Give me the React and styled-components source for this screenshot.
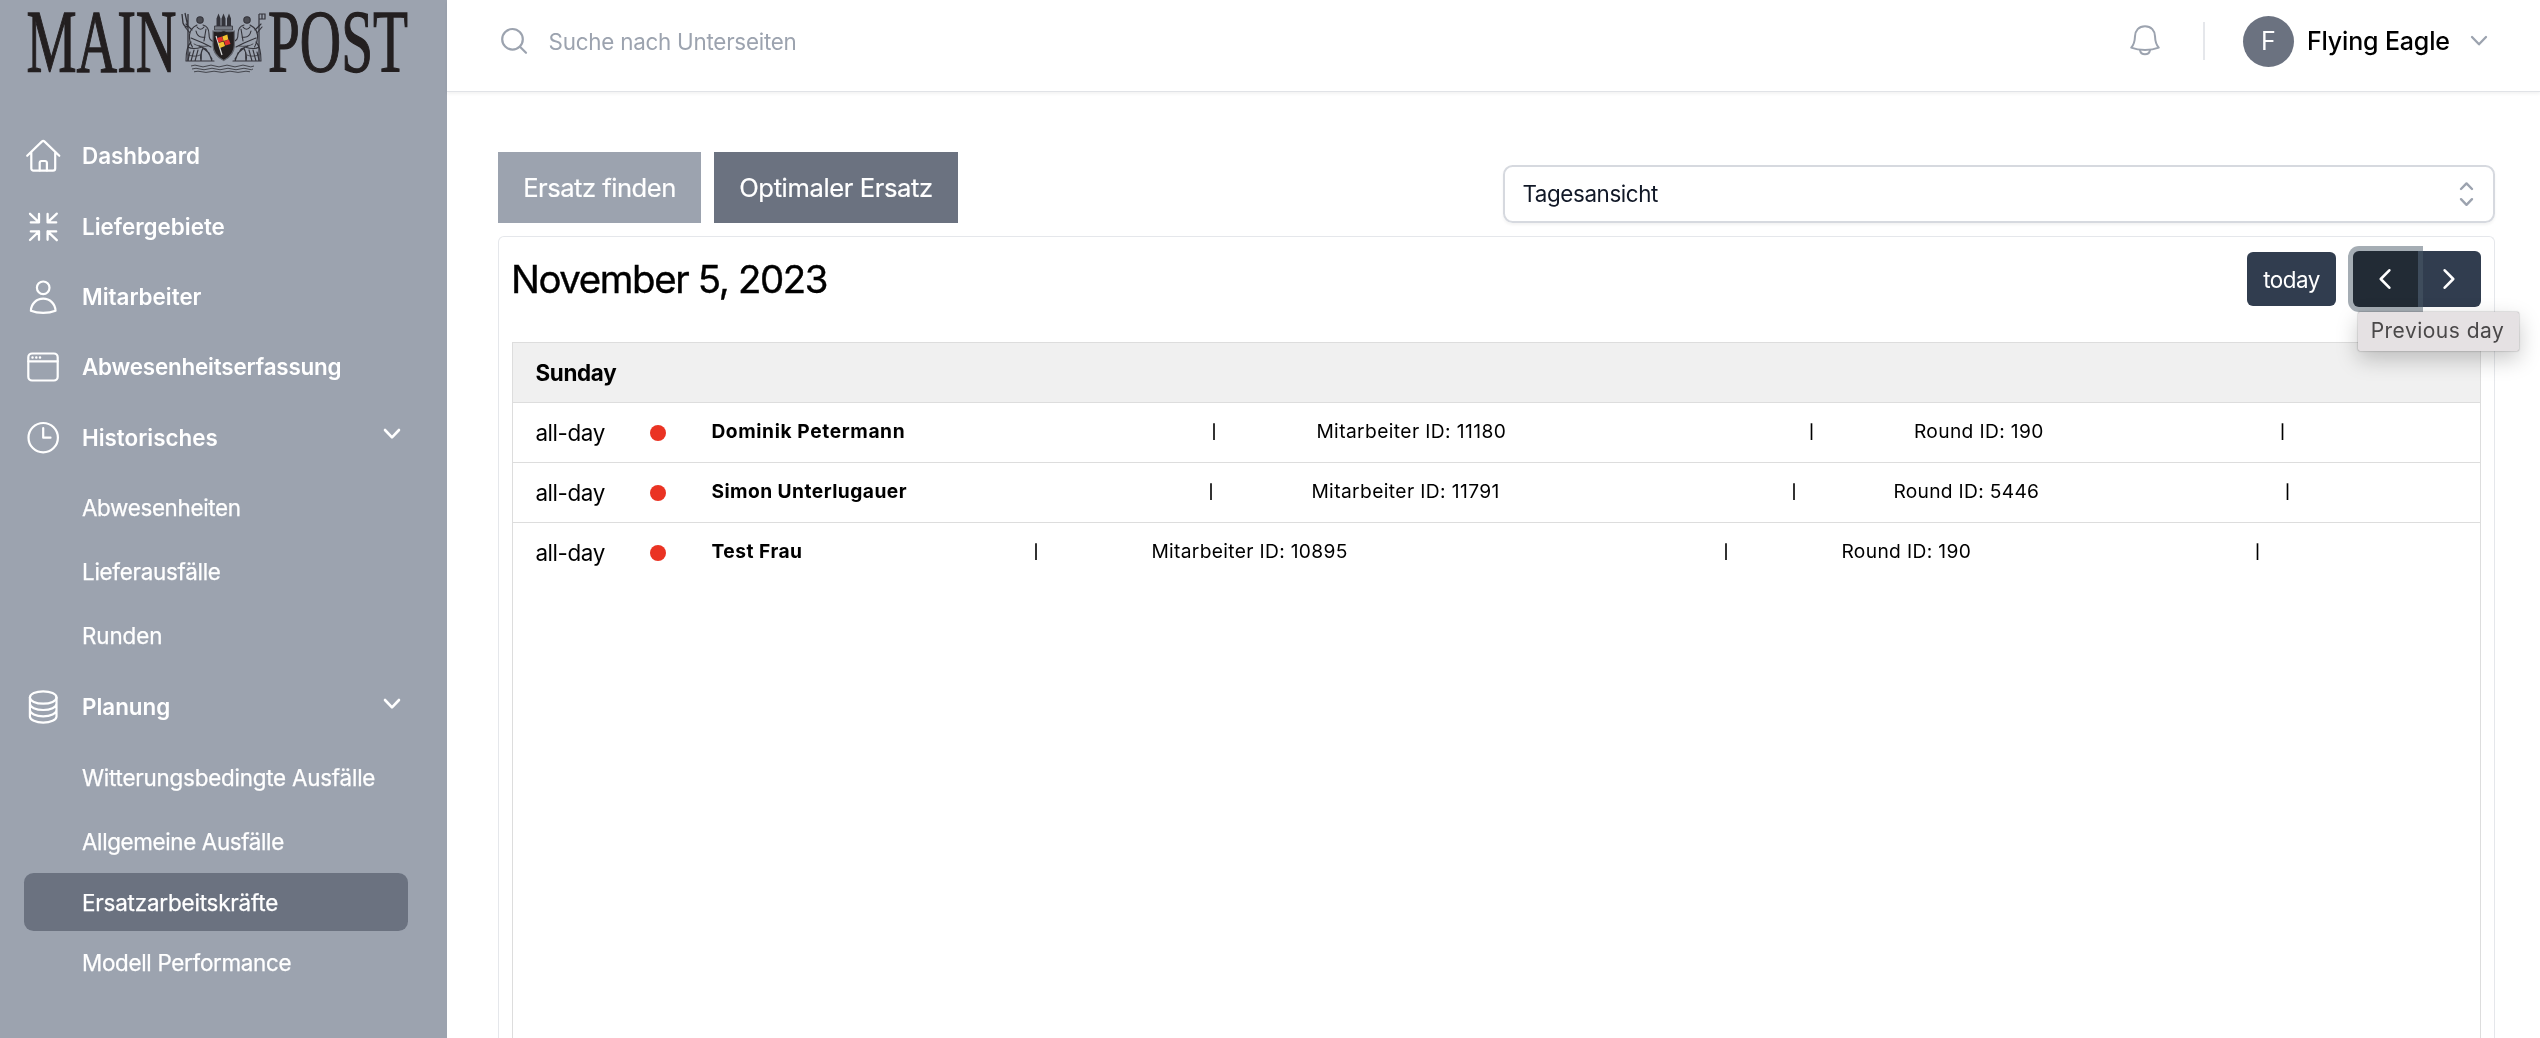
import React from 'react';
import styled, { createGlobalStyle } from 'styled-components';

const GlobalStyle = createGlobalStyle`
  *, *::before, *::after { box-sizing: border-box; }
  body {
    margin: 0;
    overflow: hidden;
    background: #fff;
    color: #000;
    font-family: Inter, 'Liberation Sans', sans-serif;
    font-size: 22.4px;
  }
  button { font: inherit; border: 0; margin: 0; cursor: pointer; }
`;

const Shell = styled.div`
  display: flex;
  height: 1038px;
  overflow: hidden;
  will-change: transform;
`;

/* ---------- sidebar ---------- */
const Sidebar = styled.aside`
  flex: none;
  width: 447px;
  padding: 0 39px 0 24px;
  background: #9ca3af;
  color: #fff;
`;

const LogoBox = styled.div`
  height: 120.6px;
  margin-left: -24px;
  svg { display: block; overflow: visible; }
`;

const NavItem = styled.a`
  display: flex;
  align-items: center;
  height: 70.4px;
  font-weight: 600;
  letter-spacing: ${(p) => p.$track || 0}px;
  svg.icon { flex: none; margin: 0 19px 0 -1px; }
  svg.caret { margin: -6px 7px 0 auto; }
`;

const SubNav = styled.div`
  display: flex;
  flex-direction: column;
  padding: 3.4px 0;
`;

const SubItem = styled.a`
  display: flex;
  align-items: center;
  height: ${(p) => (p.$compact ? 58 : 64)}px;
  margin-top: ${(p) => (p.$compact && !p.$active ? 2 : 0)}px;
  padding-left: 58px;
  border-radius: 9.6px;
  background: ${(p) => (p.$active ? '#6b7280' : 'transparent')};
  letter-spacing: ${(p) => p.$track || 0}px;
  -webkit-text-stroke: 0.25px #fff;
`;

/* ---------- header ---------- */
const Content = styled.div`
  flex: 1;
  min-width: 0;
  display: flex;
  flex-direction: column;
`;

const Header = styled.header`
  flex: none;
  display: flex;
  align-items: center;
  height: 92px;
  padding: 0 52px 9px 51px;
  border-bottom: 1px solid #e1e3e7;
  box-shadow: 0 2px 3px rgba(0, 0, 0, 0.05);
`;

const Search = styled.div`
  flex: 1;
  display: flex;
  align-items: center;
  gap: 18.600px;
  color: #9ca3af;
  letter-spacing: -0.24px;
`;

const Divider = styled.div`
  width: 2px;
  height: 38px;
  margin: 0 38px 0 42px;
  background: #e5e7eb;
`;

const Profile = styled.div`
  display: flex;
  align-items: center;
`;

const Avatar = styled.div`
  display: grid;
  place-items: center;
  width: 51px;
  height: 51px;
  border-radius: 50%;
  background: #6b7280;
  color: #fff;
  font-size: 25px;
`;

const UserName = styled.span`
  width: 163px;
  margin-left: 13px;
  font-size: 25px;
  font-weight: 500;
  letter-spacing: -0.17px;
  white-space: nowrap;
`;

/* ---------- page ---------- */
const Main = styled.main`
  flex: 1;
  display: flex;
  flex-direction: column;
  padding: 60px 45px 0 51px;
`;

const Actions = styled.div`
  display: flex;
  align-items: flex-end;
  gap: 13px;
  height: 71px;
  margin-bottom: 13px;
`;

const ActionButton = styled.button`
  width: ${(p) => p.$width}px;
  height: 71px;
  padding: 0;
  background: ${(p) => (p.$active ? '#6b7280' : '#9ca3af')};
  color: #fff;
  font-size: 25.6px;
  letter-spacing: ${(p) => p.$track}px;
  -webkit-text-stroke: 0.2px #fff;
`;

const Select = styled.div`
  display: flex;
  align-items: center;
  justify-content: space-between;
  width: 992px;
  height: 58px;
  margin-left: auto;
  padding: 0 19px 1px 17.400px;
  border: 2px solid #d6d9df;
  border-radius: 9.6px;
  box-shadow: 0 2px 3px rgba(0, 0, 0, 0.05);
  color: #111827;
  letter-spacing: -0.397px;
`;

const Card = styled.section`
  flex: 1;
  display: flex;
  flex-direction: column;
  width: 1997px;
  padding: 0 13px 0 13.4px;
  border: 1px solid #e5e7eb;
  border-bottom: 0;
  border-radius: 6px 6px 0 0;
`;

const CalendarBar = styled.div`
  display: flex;
  align-items: center;
  height: 84px;
  margin-bottom: 21px;
`;

const Title = styled.h2`
  flex: 1;
  margin: 0 0 0 -1.500px;
  font-size: 38.4px;
  font-weight: 400;
  letter-spacing: -1.36px;
  -webkit-text-stroke: 0.4px #000;
`;

const TodayButton = styled.button`
  width: 89px;
  height: 54px;
  padding: 0;
  border-radius: 6px;
  background: #313d4f;
  color: #fff;
  letter-spacing: -0.47px;
`;

const ButtonGroup = styled.div`
  position: relative;
  display: flex;
  margin-left: 17px;
`;

const StepButton = styled.button`
  display: grid;
  place-items: center;
  width: ${(p) => (p.$focus ? 65 : 63)}px;
  height: 56px;
  padding: 0 2px 0 0;
  border-radius: ${(p) => (p.$focus ? '6px 0 0 6px' : '0 6px 6px 0')};
  background: ${(p) => (p.$focus ? '#222b35' : '#313d4f')};
  ${(p) => p.$focus && 'position: relative; z-index: 1; box-shadow: 0 0 0 5px rgba(76, 91, 106, 0.5);'}
`;

const Tooltip = styled.div`
  position: absolute;
  z-index: 2;
  top: 61px;
  left: 5px;
  width: 161px;
  height: 39px;
  display: grid;
  place-items: center;
  padding: 0 2px 2px 0;
  border-radius: 2px;
  background: #e5e1e3;
  box-shadow: 0 0 1.5px rgba(0, 0, 0, 0.5), 0 8px 22px rgba(0, 0, 0, 0.22);
  color: #4a4849;
  font-size: 21px;
  letter-spacing: 0.48px;
  white-space: nowrap;
`;

const Table = styled.div`
  flex: 1;
  border: 1px solid #ddd;
  border-bottom: 0;
`;

const DayHeader = styled.div`
  display: flex;
  align-items: center;
  height: 60px;
  padding-left: 22px;
  background: #f0f0f0;
  border-bottom: 1px solid #ddd;
  font-weight: 700;
  letter-spacing: -0.3px;
`;

const EventRow = styled.div`
  display: flex;
  align-items: center;
  height: 60px;
  padding-left: 22px;
  border-bottom: 1px solid #ddd;
  &:last-child { border-bottom-color: transparent; }
`;

const Time = styled.span`
  width: 115px;
  letter-spacing: -0.4px;
`;

const Dot = styled.span`
  width: 16px;
  height: 16px;
  margin-right: 45px;
  border-radius: 50%;
  background: #ea3323;
`;

const EventText = styled.div`
  display: grid;
  align-items: center;
  grid-template-columns: ${(p) => p.$columns};
  margin-top: -3px;
  font-size: 19.2px;
  white-space: nowrap;
`;

const Name = styled.b`
  font-weight: 700;
  letter-spacing: ${(p) => p.$track}px;
`;

const Field = styled.span`
  letter-spacing: ${(p) => p.$track}px;
`;

const Separator = styled.span`
  font-size: 14px;
  font-weight: 600;
  padding-top: 1px;
`;

const Icon = ({ children, size = 40, w = size, h = size, stroke = 2, className, color = 'currentColor' }) => (
  <svg className={className} width={w} height={h} viewBox={`0 0 ${w} ${h}`} fill="none" stroke={color}
    strokeWidth={stroke} strokeLinecap="round" strokeLinejoin="round">{children}</svg>
);

const Home = () => (
  <Icon className="icon" stroke={2.200}>
    <path d="M4.2 19.8 18.8 5.6a2 2 0 0 1 2.8 0L36.3 19.8M8.3 16v16.4a2.2 2.2 0 0 0 2.2 2.2H30a2.2 2.2 0 0 0 2.2-2.2V16" />
    <path d="M16.7 34.4V26.8a1.8 1.8 0 0 1 1.8-1.8h3.6a1.8 1.8 0 0 1 1.8 1.8v7.6" />
  </Icon>
);
const PointingIn = () => (
  <Icon className="icon" stroke={2.3}>
    <path d="M16 8v8.4H7.8M16 16.4 7 7.8M24.6 8v8.4h8.6M24.6 16.4 33.8 7.6M16 33.8v-8.4H7.8M16 25.4 7 34M24.6 33.8v-8.4h8.6M24.6 25.4l9.2 8.8" />
  </Icon>
);
const Person = () => (
  <Icon className="icon" stroke={2.200}>
    <circle cx="20.2" cy="10.8" r="6.3" />
    <path d="M7.9 33.7C8.1 26.8 13.5 21.7 20.2 21.7s12.1 5.1 12.3 12c-3.6 1.5-7.8 2.2-12.3 2.2s-8.7-.7-12.3-2.2z" />
  </Icon>
);
const Window = () => (
  <Icon className="icon" stroke={2.200}>
    <rect x="5.3" y="6.5" width="29.4" height="27" rx="3.8" />
    <path d="M5.3 14.3h29.4" />
    <path d="M9.5 10.500h.02M13.3 10.500h.02M17 10.500h.02" strokeWidth="2.5" />
  </Icon>
);
const Clock = () => (
  <Icon className="icon" stroke={2.200}>
    <circle cx="20.2" cy="20.7" r="14.7" />
    <path d="M20.2 11v9.7h7.3" />
  </Icon>
);
const Stack = () => (
  <Icon className="icon" stroke={2.200}>
    <ellipse cx="20.2" cy="10.5" rx="13.3" ry="6.2" />
    <path d="M6.9 10.5v18.9c0 3.4 6 6.2 13.3 6.2s13.3-2.8 13.3-6.2V10.5M6.9 16.8c0 3.4 6 6.2 13.3 6.2s13.3-2.8 13.3-6.2M6.9 23.1c0 3.4 6 6.2 13.3 6.2s13.3-2.8 13.3-6.2" />
  </Icon>
);
const Caret = ({ className, stroke = 2.6, color }) => (
  <Icon className={className} w={18} h={12} stroke={stroke} color={color}><path d="M2 2l7 7.3L16 2" /></Icon>
);

const Figure = () => (
  <g fill="none" stroke="#33333a" strokeWidth="1.1" strokeLinecap="round" strokeLinejoin="round">
    <circle cx="200" cy="20" r="3.2" fill="#4a4b52" />
    <path d="M197 25c-4 2-7 5-7.5 10-.5 6 1 9 3 12M203 25c4 1 6 4 6 9s1 6 5 8M197 27c2 3 5 3 7 0M196 31c1 5 4 7 9 6M206 29l-2 12M191 38l12 5 8 4M190 33l-5-6M192 30l-6-6" />
    <path d="M191 42c-4 4-5 10-5 19h15c1-5-1-9 2-12M188 47c3 2 8 2 14 0M190 52l-2 8M194 50l-3 11M198 50l-3 11M203 48c-2 4-3 9-2 13M203 48l6 5 3 8M199 46l7 3 6 10M186 61h28" />
    <path d="M194 44c3 2 9 3 14 2M188 55c4 1 8 2 12 0" strokeWidth=".8" />
  </g>
);

const Logo = () => (
  <svg width="447" height="84" viewBox="0 0 447 84">
    <g fill="#231f20" stroke="#231f20" strokeWidth="1.3" fontFamily="'Liberation Serif', serif" fontSize="88">
      <text x="26.500" y="70.500" textLength="150" lengthAdjust="spacingAndGlyphs">MAIN</text>
      <text x="268" y="70.500" textLength="140" lengthAdjust="spacingAndGlyphs">POST</text>
    </g>
    <Figure />
    <path d="M188 27v34M182 14l1 9c1 3 3 4 5 4M185 13l3 14M188 14v13" fill="none" stroke="#33333a" strokeWidth="1.3" />
    <g transform="matrix(-1 0 0 1 447 0)"><Figure /></g>
    <path d="M259 14v47M259 14h6v5h-6M262 14v5" fill="none" stroke="#33333a" strokeWidth="1.2" />
    <g fill="#33333a">
      <path d="M216.5 18.500l2-5 2 5v8h-4zM221.5 18.500l2-5 2 5v8h-4zM227 18.500l2-5 2 5v8h-4z" />
      <path d="M214.5 26h18v4h-18z" fill="#777b84" stroke="#33333a" strokeWidth=".8" />
    </g>
    <path d="M213 31c3.5 1 7 1 10.700-.6 3.6 1.6 7.2 1.6 10.7.6v14c0 8-5 12.5-10.7 15.5C218 57.5 213 53 213 45z" fill="#231f20" stroke="#62656d" strokeWidth="1.2" />
    <path d="M216 36l6 19" stroke="#ddd" strokeWidth="1.2" />
    <path d="M217 38l5-1.5 1.5 4.500-5 1.6zM224 41l5-1.5 1.5 4.500-5 1.6z" fill="#e3342f" />
    <path d="M222.3 36.500l5-2 1 5-4.700 1.6zM218.5 43l5-1.5 1.5 4.500-5 2z" fill="#f2c230" />
    <path d="M191 66q4-1.8 8 0t8 0 8 0 8 0 8 0 8 0 8 0 7 0M192 69q4-1.5 8 0t8 0 8 0 8 0 8 0 8 0 8 0 5 0M194 71.800q4-1.2 8 0t8 0 8 0 8 0 8 0 8 0 8 0" fill="none" stroke="#44464d" strokeWidth="1" />
  </svg>
);

const EVENTS = [
  { name: 'Dominik Petermann', track: 0.6, id: '11180', idTrack: 0.4, round: '190', roundTrack: 0.36, columns: '500px 105px 492.5px 105px 366px 20px' },
  { name: 'Simon Unterlugauer', track: 0.448, id: '11791', idTrack: 0.4, round: '5446', roundTrack: 0.3, columns: '497px 103px 480px 102px 391.5px 20px' },
  { name: 'Test Frau', track: 0.509, id: '10895', idTrack: 0.33, round: '190', roundTrack: 0.36, columns: '322px 118px 572px 118px 413.5px 20px' },
];

export default function App() {
  return (
    <>
      <GlobalStyle />
      <Shell>
        <Sidebar>
          <LogoBox><Logo /></LogoBox>
          <NavItem><Home />Dashboard</NavItem>
          <NavItem><PointingIn />Liefergebiete</NavItem>
          <NavItem><Person />Mitarbeiter</NavItem>
          <NavItem $track={-0.19}><Window />Abwesenheitserfassung</NavItem>
          <NavItem><Clock />Historisches<Caret className="caret" /></NavItem>
          <SubNav>
            <SubItem $track={-0.33}>Abwesenheiten</SubItem>
            <SubItem $track={-0.26}>Lieferausfälle</SubItem>
            <SubItem $track={-0.1}>Runden</SubItem>
          </SubNav>
          <NavItem><Stack />Planung<Caret className="caret" /></NavItem>
          <SubNav>
            <SubItem $track={-0.22}>Witterungsbedingte Ausfälle</SubItem>
            <SubItem $track={-0.36}>Allgemeine Ausfälle</SubItem>
            <SubItem $compact $active $track={-0.17}>Ersatzarbeitskräfte</SubItem>
            <SubItem $compact $track={-0.3}>Modell Performance</SubItem>
          </SubNav>
        </Sidebar>
        <Content>
          <Header>
            <Search>
              <Icon w={32} h={32} stroke={2.2}><circle cx="14.5" cy="14.3" r="10.3" /><path d="M22 21.800l6 6" /></Icon>
              Suche nach Unterseiten
            </Search>
            <Icon w={32} h={36} color="#9ca3af">
              <path d="M16 3.2c-6.3 0-9.8 4.4-10 10-.2 5.5-.8 8.3-3.8 11.4 4.2 1.7 9 2.4 13.8 2.4s9.6-.7 13.8-2.4C26.8 21.5 26.2 18.7 26 13.2c-.2-5.6-3.7-10-10-10z" />
              <path d="M11 27.2a5.1 5.1 0 0 0 10 0" />
            </Icon>
            <Divider />
            <Profile>
              <Avatar>F</Avatar>
              <UserName>Flying Eagle</UserName>
              <Caret stroke={2.3} color="#9ca3af" />
            </Profile>
          </Header>
          <Main>
            <Actions>
              <ActionButton $width={203} $track={-0.5}>Ersatz finden</ActionButton>
              <ActionButton $width={244} $track={-0.4} $active>Optimaler Ersatz</ActionButton>
              <Select>
                Tagesansicht
                <Icon w={16} h={28} stroke={2.4} color="#9ca3af"><path d="M3 9l5.5-5.6L14 9M3 19.200l5.5 5.6 5.5-5.6" /></Icon>
              </Select>
            </Actions>
            <Card>
              <CalendarBar>
                <Title>November 5, 2023</Title>
                <TodayButton>today</TodayButton>
                <ButtonGroup>
                  <StepButton $focus>
                    <Icon w={12} h={22} stroke={2.6} color="#fff"><path d="M10.3 2.3L1.8 11l8.5 8.7" /></Icon>
                  </StepButton>
                  <StepButton>
                    <Icon w={12} h={22} stroke={2.6} color="#fff"><path d="M1.7 2.3l8.5 8.7-8.5 8.7" /></Icon>
                  </StepButton>
                  <Tooltip>Previous day</Tooltip>
                </ButtonGroup>
              </CalendarBar>
              <Table>
                <DayHeader>Sunday</DayHeader>
                {EVENTS.map((e) => (
                  <EventRow key={e.name}>
                    <Time>all-day</Time>
                    <Dot />
                    <EventText $columns={e.columns}>
                      <Name $track={e.track}>{e.name}</Name>
                      <Separator>|</Separator>
                      <Field $track={e.idTrack}>Mitarbeiter ID: {e.id}</Field>
                      <Separator>|</Separator>
                      <Field $track={e.roundTrack}>Round ID: {e.round}</Field>
                      <Separator>|</Separator>
                    </EventText>
                  </EventRow>
                ))}
              </Table>
            </Card>
          </Main>
        </Content>
      </Shell>
    </>
  );
}
